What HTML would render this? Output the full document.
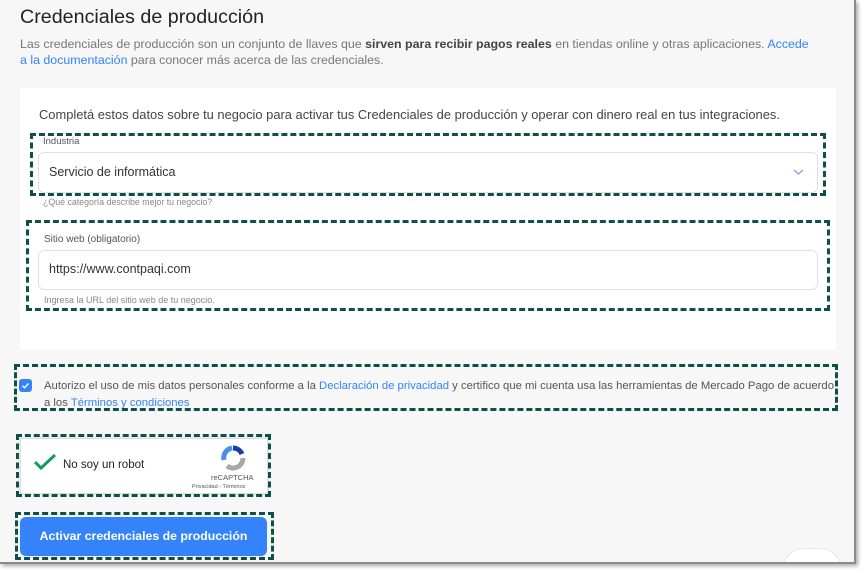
<!DOCTYPE html>
<html><head><meta charset="utf-8"><style>
*{margin:0;padding:0;box-sizing:border-box}
body{width:864px;height:573px;background:#fff;font-family:"Liberation Sans",sans-serif;position:relative;overflow:hidden}
.page{position:absolute;left:0;top:0;width:856px;height:564px;background:#f7f7f7;border-right:2px solid #8a8a8a;border-bottom:2px solid #8a8a8a;box-shadow:2px 2px 4px rgba(0,0,0,.35);overflow:hidden}
.a{position:absolute;white-space:nowrap}
.d{position:absolute;border:3px dashed #0d4f4a}
.card{position:absolute;left:20px;top:88px;width:816px;height:262px;background:#fff}
.inp{position:absolute;left:38px;width:780px;background:#fff;border:1px solid #e0e0e0;border-radius:6px}
.l{color:#3483fa}
</style></head><body>
<div class="page">
<div class="a" style="left:20px;top:6px;font-size:19.7px;color:#222">Credenciales de producción</div>
<div class="a" style="left:20px;top:36px;font-size:12.4px;color:#777;line-height:16px">Las credenciales de producción son un conjunto de llaves que <b style="color:#444">sirven para recibir pagos reales</b> en tiendas online y otras aplicaciones. <span class="l">Accede</span><br><span class="l">a la documentación</span> para conocer más acerca de las credenciales.</div>
<div class="card"></div>
<div class="a" style="left:39px;top:107px;font-size:12.9px;color:#444">Completá estos datos sobre tu negocio para activar tus Credenciales de producción y operar con dinero real en tus integraciones.</div>
<div class="a" style="left:43px;top:136px;font-size:9.5px;color:#555">Industria</div>
<div class="inp" style="top:152px;height:41px"></div>
<div class="a" style="left:49px;top:165px;font-size:12.5px;color:#333">Servicio de informática</div>
<svg class="a" style="left:793px;top:168px" width="11" height="8"><path d="M1 2l4.5 4L10 2" stroke="#7fa5e8" stroke-width="1.3" fill="none"/></svg>
<div class="a" style="left:43px;top:197px;font-size:8.8px;color:#888">¿Qué categoría describe mejor tu negocio?</div>
<div class="d" style="left:30px;top:133px;width:796px;height:63px"></div>
<div class="a" style="left:44px;top:234px;font-size:10px;color:#555">Sitio web (obligatorio)</div>
<div class="inp" style="top:250px;height:40px"></div>
<div class="a" style="left:49px;top:262px;font-size:12.5px;color:#333">https://www.contpaqi.com</div>
<div class="a" style="left:44px;top:295px;font-size:9px;color:#888">Ingresa la URL del sitio web de tu negocio.</div>
<div class="d" style="left:26px;top:220px;width:804px;height:91px"></div>
<div class="a" style="left:19px;top:379px;width:13px;height:13px;background:#3483fa;border-radius:3px"><svg width="13" height="13"><path d="M3.5 6.8l2 2 4-4.3" stroke="#fff" stroke-width="1.4" fill="none"/></svg></div>
<div class="a" style="left:44px;top:378px;font-size:11.3px;color:#555;line-height:17px">Autorizo el uso de mis datos personales conforme a la <span class="l">Declaración de privacidad</span> y certifico que mi cuenta usa las herramientas de Mercado Pago de acuerdo<br>a los <span class="l">Términos y condiciones</span></div>
<div class="d" style="left:14px;top:364px;width:824px;height:47px"></div>
<div class="a" style="left:20px;top:438px;width:248px;height:56px;background:#fff;border:1px solid #ddd;box-shadow:0 0 3px rgba(0,0,0,.15)"></div>
<svg class="a" style="left:33px;top:453px" width="24" height="18"><path d="M2 9l6 6L22 2" stroke="#0f9d58" stroke-width="3" fill="none"/></svg>
<div class="a" style="left:63px;top:459px;font-size:11.5px;color:#222">No soy un robot</div>
<svg class="a" style="left:220px;top:445px" width="26" height="26"><path d="M13 3a10 10 0 0 1 9 6" stroke="#1c3aa9" stroke-width="5" fill="none"/><path d="M23 13a10 10 0 0 1-16 8" stroke="#a8a8a8" stroke-width="5" fill="none"/><path d="M4 15a10 10 0 0 1 8-12" stroke="#4a90e2" stroke-width="5" fill="none"/></svg>
<div class="a" style="left:211px;top:473px;font-size:7.5px;color:#555">reCAPTCHA</div>
<div class="a" style="left:192px;top:484px;font-size:5.5px;color:#555">Privacidad - Términos</div>
<div class="d" style="left:16px;top:434px;width:255px;height:63px"></div>
<div class="a" style="left:20px;top:517px;width:247px;height:39px;background:#3483fa;border-radius:6px;color:#fff;font-size:12.3px;font-weight:bold;text-align:center;line-height:39px">Activar credenciales de producción</div>
<div class="d" style="left:15px;top:512px;width:259px;height:48px"></div>
<div class="a" style="left:783px;top:548px;width:58px;height:40px;border:1px solid #e6e6e6;border-radius:20px;background:#fff"></div>
</div>
</body></html>
